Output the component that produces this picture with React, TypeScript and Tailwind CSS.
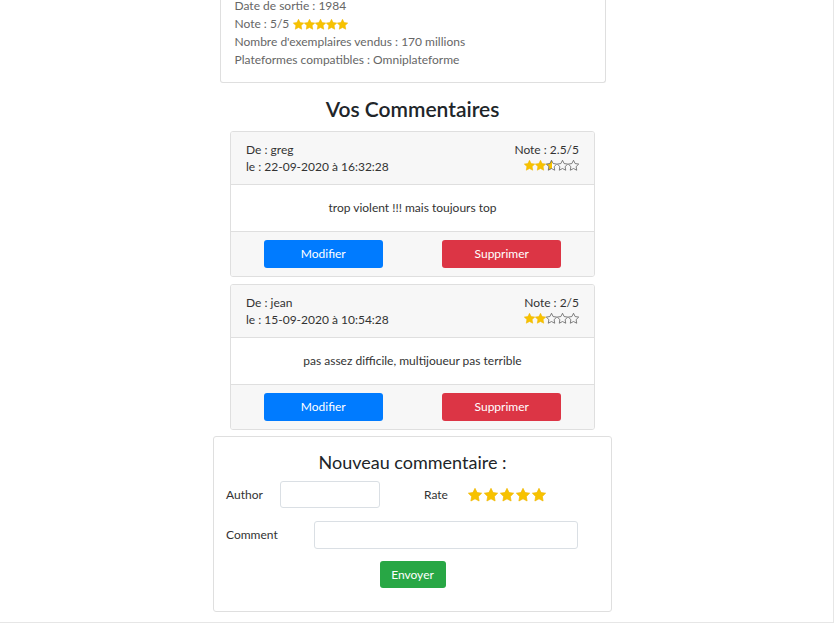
import React from "react";

const STAR =
  "M12 2.5l2.94 5.96 6.56.95-4.75 4.63 1.12 6.54L12 17.49l-5.87 3.09 1.12-6.54L2.5 9.41l6.56-.95L12 2.5z";

type StarProps = { fill: "full" | "half" | "empty"; size: number; id?: string };

const Star: React.FC<StarProps> = ({ fill, size, id }) => {
  if (fill === "full") {
    return (
      <svg width={size} height={size} viewBox="2 2 20 20">
        <path d={STAR} fill="#f7c200" stroke="#f0b800" strokeWidth={1} strokeLinejoin="round" />
      </svg>
    );
  }
  if (fill === "half") {
    return (
      <svg width={size} height={size} viewBox="2 2 20 20">
        <defs>
          <linearGradient id={id} x1="0" x2="1" y1="0" y2="0">
            <stop offset="50%" stopColor="#f7c200" />
            <stop offset="50%" stopColor="#ffffff" />
          </linearGradient>
        </defs>
        <path d={STAR} fill={`url(#${id})`} stroke="#666" strokeWidth={1.5} strokeLinejoin="round" />
      </svg>
    );
  }
  return (
    <svg width={size} height={size} viewBox="2 2 20 20">
      <path d={STAR} fill="none" stroke="#666" strokeWidth={1.5} strokeLinejoin="round" />
    </svg>
  );
};

const Stars: React.FC<{ value: number; size: number; id: string; gap?: string }> = ({
  value,
  size,
  id,
  gap = "gap-0",
}) => (
  <div className={`flex ${gap}`}>
    {[1, 2, 3, 4, 5].map((i) => (
      <Star
        key={i}
        size={size}
        id={`${id}-${i}`}
        fill={value >= i ? "full" : value >= i - 0.5 ? "half" : "empty"}
      />
    ))}
  </div>
);

interface Comment {
  author: string;
  date: string;
  rating: number;
  text: string;
}

const comments: Comment[] = [
  { author: "greg", date: "22-09-2020 à 16:32:28", rating: 2.5, text: "trop violent !!! mais toujours top" },
  { author: "jean", date: "15-09-2020 à 10:54:28", rating: 2, text: "pas assez difficile, multijoueur pas terrible" },
];

const CommentCard: React.FC<{ comment: Comment; index: number }> = ({ comment, index }) => (
  <div className="w-[365px] mb-[7px] border border-[#dfdfdf] rounded-[3px] overflow-hidden text-[#333]">
    <div className="flex justify-between bg-[#f7f7f7] border-b border-[#dfdfdf] px-[15px] py-[9px] leading-[17px]">
      <div>
        <div>De : {comment.author}</div>
        <div>le : {comment.date}</div>
      </div>
      <div className="flex flex-col items-end">
        <div>Note : {comment.rating}/5</div>
        <div className="mt-[2px]">
          <Stars value={comment.rating} size={11} id={`c${index}`} />
        </div>
      </div>
    </div>
    <div className="py-[14px] text-center leading-[18px]">{comment.text}</div>
    <div className="grid grid-cols-2 justify-items-center bg-[#f7f7f7] border-t border-[#dfdfdf] py-[8px] px-[3px]">
      <button className="w-[119px] h-[28px] rounded-[3px] bg-[#007bff] text-white">Modifier</button>
      <button className="w-[119px] h-[28px] rounded-[3px] bg-[#dc3545] text-white">Supprimer</button>
    </div>
  </div>
);

export default function App() {
  return (
    <div
      className="w-[835px] h-[624px] overflow-hidden bg-white text-[12px]"
      style={{ fontFamily: 'Lato, "Open Sans", sans-serif' }}
    >
      <div className="w-[834px] h-[623px] border-r border-b border-[#e6e6e6] flex flex-col items-center pr-[8px]">
        {/* game info card */}
        <div className="w-[386px] border border-t-0 border-[#dfdfdf] rounded-b-[3px] px-[14px] pb-[13px] text-[#666] leading-[18px]">
          <div className="-mt-[3px]">
            <div>Date de sortie : 1984</div>
            <div className="flex items-center gap-[4px]">
              Note : 5/5 <Stars value={5} size={11} id="g" />
            </div>
            <div>Nombre d'exemplaires vendus : 170 millions</div>
            <div>Plateformes compatibles : Omniplateforme</div>
          </div>
        </div>

        <h2 className="mt-[13px] mb-[10px] text-[21px] leading-[25px] font-semibold text-[#212529]">
          Vos Commentaires
        </h2>

        {comments.map((c, i) => (
          <CommentCard key={i} comment={c} index={i} />
        ))}

        {/* new comment form */}
        <div className="w-[399px] border border-[#dfdfdf] rounded-[3px] pl-[12px] pt-[14px] pb-[23px] text-[#333] mt-[-1px]">
          <div className="text-center text-[18px] leading-[22px] text-[#212529] -ml-[12px]">Nouveau commentaire :</div>
          <div className="flex items-center mt-[8px]">
            <label className="w-[54px]">Author</label>
            <input className="w-[100px] h-[27px] border border-[#dadfe4] rounded-[3px] outline-none" />
            <label className="ml-[44px] w-[44px]">Rate</label>
            <Stars value={5} size={14} id="r" gap="gap-[2px]" />
          </div>
          <div className="flex items-center mt-[13px]">
            <label className="w-[88px]">Comment</label>
            <input className="w-[264px] h-[28px] border border-[#dadfe4] rounded-[3px] outline-none" />
          </div>
          <div className="flex justify-center mt-[12px] -ml-[12px]">
            <button className="w-[66px] h-[27px] rounded-[3px] bg-[#28a745] text-white">Envoyer</button>
          </div>
        </div>
      </div>
    </div>
  );
}
